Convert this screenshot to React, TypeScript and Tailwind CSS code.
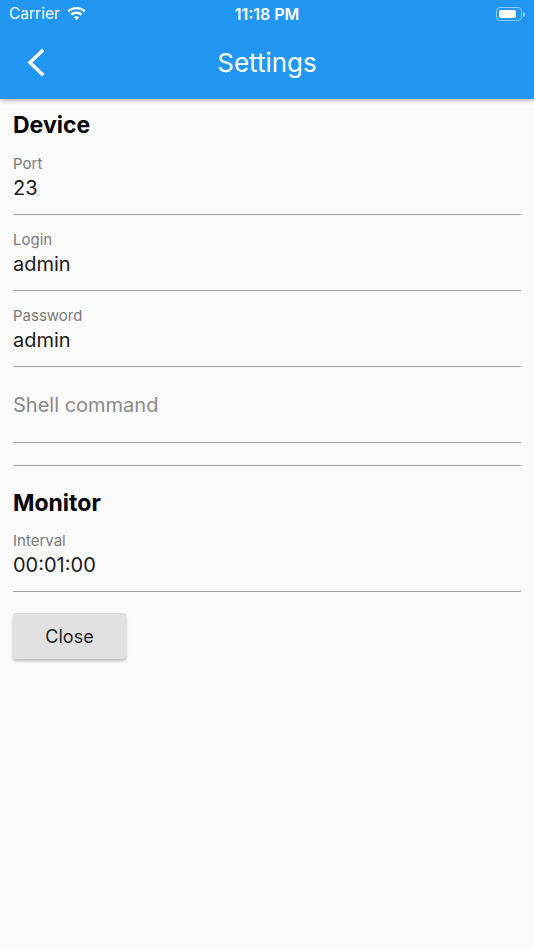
import React from "react";

const font = { fontFamily: "Inter, 'Noto Sans', sans-serif" };

function StatusBar() {
  return (
    <div className="relative flex h-[28px] items-center px-[9px] text-[15px] text-white">
      <div className="flex items-center gap-[7px]">
        <span className="text-[15.5px]">Carrier</span>
        <svg width="19" height="14" viewBox="0 0 19 14" fill="white">
          <path d="M9.5 0C6 0 2.8 1.3 0.4 3.5l1.6 1.7C4 3.4 6.6 2.3 9.5 2.3s5.5 1.1 7.5 2.9l1.6-1.7C16.2 1.3 13 0 9.5 0z" />
          <path d="M9.5 4.6c-2.2 0-4.3 0.8-5.9 2.2l1.6 1.7c1.1-1 2.6-1.6 4.3-1.6s3.2 0.6 4.3 1.6l1.6-1.7C13.8 5.4 11.7 4.6 9.5 4.6z" />
          <path d="M9.5 9.2c-1 0-2 0.4-2.7 1L9.5 13l2.7-2.8c-0.7-0.6-1.7-1-2.7-1z" />
        </svg>
      </div>
      <div className="absolute left-0 right-0 top-0 flex h-[28px] items-center justify-center text-[16px] font-semibold">
        11:18 PM
      </div>
      <div className="ml-auto flex items-center">
        <div className="flex h-[14px] w-[26px] items-center rounded-[4px] border border-white/50 p-[2px]">
          <div className="h-full w-[17px] rounded-[2px] bg-white" />
        </div>
        <div className="ml-[1px] h-[5px] w-[2px] rounded-r-sm bg-white/50" />
      </div>
    </div>
  );
}

function AppBar() {
  return (
    <div className="relative z-10 bg-[#2196f3] shadow-[0_2px_4px_rgba(0,0,0,0.25)]">
      <StatusBar />
      <div className="relative flex h-[71px] items-center">
        <svg className="absolute left-[26px] top-[19px]" width="20" height="30" viewBox="0 0 20 30" fill="none">
          <path d="M16 4L4 15.5L16 27" stroke="white" strokeWidth="3.4" strokeLinecap="square" />
        </svg>
        <div className="w-full pb-[2px] text-center text-[26px] leading-[30px] text-white">Settings</div>
      </div>
    </div>
  );
}

function Field({ label, value }: { label: string; value?: string }) {
  if (!value) {
    return (
      <div className="h-[76px] border-b border-[#a3a3a3] pt-[26px]">
        <div className="text-[20px] leading-[24px] text-[#8a8a8a]">{label}</div>
      </div>
    );
  }
  return (
    <div className="h-[76px] border-b border-[#a3a3a3] pt-[17px]">
      <div className="text-[15px] leading-[16px] text-[#7a7a7a]">{label}</div>
      <div className="mt-[4px] text-[20px] leading-[24px] text-[#1c1c1c]">{value}</div>
    </div>
  );
}

export default function App() {
  return (
    <div className="min-h-[950px] bg-[#fafafa]" style={font}>
      <AppBar />
      <div className="px-[13px]">
        <div className="h-[40px] pt-[15px] text-[23px] font-bold leading-[22px] text-black">Device</div>
        <Field label="Port" value="23" />
        <Field label="Login" value="admin" />
        <Field label="Password" value="admin" />
        <Field label="Shell command" />
        <div className="mt-[22px] border-b border-[#a3a3a3]" />
        <div className="h-[40px] pt-[26px] text-[23px] font-bold leading-[22px] text-black">Monitor</div>
        <div className="mt-[10px]">
          <Field label="Interval" value="00:01:00" />
        </div>
        <button className="mt-[21px] h-[46px] w-[113px] rounded-[3px] bg-[#e0e0e0] text-[18px] text-[#1c1c1c] shadow-[0_2px_3px_rgba(0,0,0,0.25)]">
          Close
        </button>
      </div>
    </div>
  );
}
